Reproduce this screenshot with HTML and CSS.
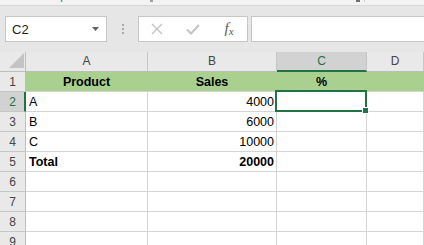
FILE: index.html
```html
<!DOCTYPE html>
<html lang="en">
<head>
    <meta charset="UTF-8">
    <title>Sheet1 - Sales</title>
    <link rel="stylesheet" href="styles.css">
</head>
<body>
    <div class="ribbon-tail">
        <div class="ribbon-group group-clip">
            <span class="group-label">Clipboard</span>
            <span class="launcher"></span>
        </div>
        <div class="ribbon-group group-font">
            <span class="group-label">Font</span>
            <span class="launcher dark"></span>
        </div>
        <span class="group-sep"></span>
    </div>

    <div class="formula-bar">
        <div class="name-box">
            <span>C2</span>
            <svg class="caret" width="7" height="4" viewBox="0 0 7 4"><polygon points="0,0 7,0 3.5,4" fill="#606060"/></svg>
        </div>
        <div class="grip"><i></i><i></i><i></i></div>
        <div class="fx-buttons">
            <span class="fx-slot">
                <svg width="12" height="12" viewBox="0 0 12 12"><path d="M1 1 L11 11 M11 1 L1 11" stroke="#c3c3c3" stroke-width="1.4" fill="none"/></svg>
            </span>
            <span class="fx-slot">
                <svg width="14" height="11" viewBox="0 0 14 11"><path d="M1 5.5 L5 9.5 L13 1" stroke="#c3c3c3" stroke-width="2" fill="none"/></svg>
            </span>
            <span class="fx-slot fx">f<span class="fx-x">x</span></span>
        </div>
        <div class="formula-input"></div>
    </div>

    <div class="sheet">
        <!-- header row -->
        <div class="corner">
            <svg width="15" height="15" viewBox="0 0 15 15"><polygon points="15,0 15,15 0,15" fill="#c4c4c4"/></svg>
        </div>
        <div class="col-hdr">A</div>
        <div class="col-hdr">B</div>
        <div class="col-hdr sel-col">C</div>
        <div class="col-hdr">D</div>

        <div class="row-hdr">1</div>
        <div class="cell fill bold center">Product</div>
        <div class="cell fill bold center">Sales</div>
        <div class="cell fill bold center">%</div>
        <div class="cell fill"></div>

        <div class="row-hdr sel-row">2</div>
        <div class="cell">A</div>
        <div class="cell num">4000</div>
        <div class="cell active"></div>
        <div class="cell"></div>

        <div class="row-hdr">3</div>
        <div class="cell">B</div>
        <div class="cell num">6000</div>
        <div class="cell"></div>
        <div class="cell"></div>

        <div class="row-hdr">4</div>
        <div class="cell">C</div>
        <div class="cell num">10000</div>
        <div class="cell"></div>
        <div class="cell"></div>

        <div class="row-hdr">5</div>
        <div class="cell bold">Total</div>
        <div class="cell num bold">20000</div>
        <div class="cell"></div>
        <div class="cell"></div>

        <div class="row-hdr">6</div>
        <div class="cell"></div>
        <div class="cell"></div>
        <div class="cell"></div>
        <div class="cell"></div>

        <div class="row-hdr">7</div>
        <div class="cell"></div>
        <div class="cell"></div>
        <div class="cell"></div>
        <div class="cell"></div>

        <div class="row-hdr">8</div>
        <div class="cell"></div>
        <div class="cell"></div>
        <div class="cell"></div>
        <div class="cell"></div>

        <div class="row-hdr">9</div>
        <div class="cell"></div>
        <div class="cell"></div>
        <div class="cell"></div>
        <div class="cell"></div>
    </div>
</body>
</html>
```

FILE: styles.css
```css
body, html {
    margin: 0;
    padding: 0;
    height: 245px;
    overflow: hidden;
    background-color: #ffffff;
    font-family: "Liberation Sans", Arial, sans-serif;
}

/* bottom edge of the ribbon, mostly scrolled away */
.ribbon-tail {
    height: 5px;
    background-color: #f3f3f3;
    border-bottom: 1px solid #d6d6d6;
    display: flex;
    overflow: hidden;
}
.ribbon-group {
    display: flex;
    align-items: flex-start;
}
.group-clip {
    width: 157px;
}
.group-font {
    width: 207px;
}
.group-label {
    flex: 1;
    text-align: center;
    font-size: 12px;
    line-height: 14px;
    margin-top: -12px;
    padding-right: 6px;
    color: #6a6a6a;
}
.launcher {
    width: 3px;
    height: 2px;
    background-color: #a0a0a0;
    margin-right: 4px;
}
.launcher.dark {
    width: 4px;
    background-color: #707070;
}
.group-sep {
    width: 1px;
    height: 2px;
    background-color: #cfcfcf;
}

/* name box + formula bar */
.formula-bar {
    height: 46px;
    box-sizing: border-box;
    background-color: #e6e6e6;
    padding: 10px 0 0 5px;
    display: flex;
    align-items: flex-start;
}
.name-box {
    width: 102px;
    height: 26px;
    box-sizing: border-box;
    background-color: #ffffff;
    border: 1px solid #c6c6c6;
    display: flex;
    align-items: center;
    justify-content: space-between;
    padding: 0 7px 0 6px;
    font-size: 13px;
    color: #222;
}
.caret {
    margin-top: -1px;
}
.grip {
    width: 31px;
    height: 26px;
    display: flex;
    flex-direction: column;
    align-items: center;
    justify-content: center;
    gap: 2px;
}
.grip i {
    width: 2px;
    height: 2px;
    background-color: #a8a8a8;
}
.fx-buttons {
    width: 110px;
    height: 26px;
    box-sizing: border-box;
    background-color: #ffffff;
    border: 1px solid #c6c6c6;
    display: flex;
}
.fx-slot {
    width: 36px;
    display: flex;
    align-items: center;
    justify-content: center;
}
.fx {
    font-family: "Liberation Serif", serif;
    font-style: italic;
    font-size: 15px;
    color: #5a5a5a;
    padding-bottom: 1px;
}
.fx-x {
    font-size: 11px;
    margin-top: 4px;
}
.formula-input {
    flex: 1;
    height: 26px;
    box-sizing: border-box;
    margin-left: 3px;
    background-color: #ffffff;
    border: 1px solid #c6c6c6;
    border-right: none;
}

/* grid */
.sheet {
    display: grid;
    grid-template-columns: 26px 122px 129px 90px 1fr;
    grid-template-rows: 20px;
    grid-auto-rows: 20px;
}
.sheet > div {
    box-sizing: border-box;
}
.corner {
    background-color: #e9e9e9;
    border-right: 1px solid #bdbdbd;
    border-bottom: 1px solid #bdbdbd;
    display: flex;
    align-items: flex-end;
    justify-content: flex-end;
    padding: 0 1px 3px 0;
}
.col-hdr {
    background-color: #e9e9e9;
    border-right: 1px solid #c6c6c6;
    border-bottom: 1px solid #bdbdbd;
    text-align: center;
    font-size: 12px;
    line-height: 19px;
    color: #444;
}
.col-hdr.sel-col {
    background-color: #d2d2d2;
    border-bottom: 2px solid #217346;
    color: #217346;
    line-height: 18px;
}
.row-hdr {
    background-color: #e9e9e9;
    border-right: 1px solid #bdbdbd;
    border-bottom: 1px solid #c6c6c6;
    text-align: center;
    font-size: 12px;
    line-height: 20px;
    color: #444;
}
.row-hdr.sel-row {
    background-color: #d2d2d2;
    border-right: 2px solid #217346;
    color: #217346;
    padding-left: 1px;
}
.cell {
    border-right: 1px solid #d4d4d4;
    border-bottom: 1px solid #d4d4d4;
    font-size: 12.5px;
    line-height: 20px;
    padding: 0 3px;
    color: #000;
    white-space: nowrap;
}
.cell.fill {
    background-color: #a9d08e;
    border-right-color: #a9d08e;
}
.cell.center {
    text-align: center;
}
.cell.num {
    text-align: right;
    padding-right: 2px;
}
.cell.bold {
    font-weight: bold;
}
.cell.active {
    position: relative;
}
.cell.active::after {
    content: "";
    position: absolute;
    left: -2px;
    top: -2px;
    right: -1px;
    bottom: -1px;
    border: 2px solid #217346;
}
.cell.active::before {
    content: "";
    position: absolute;
    right: -2px;
    bottom: -2px;
    width: 5px;
    height: 5px;
    background-color: #217346;
    box-shadow: 0 0 0 1px #ffffff;
    z-index: 1;
}
```
